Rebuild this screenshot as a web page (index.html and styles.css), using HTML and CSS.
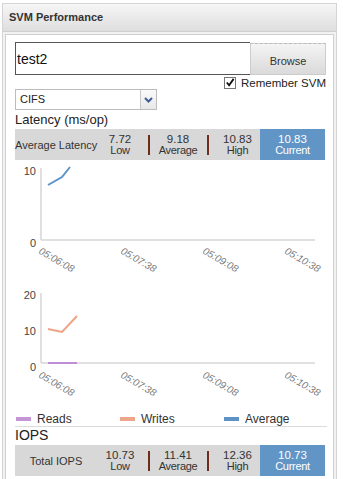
FILE: index.html
```html
<!DOCTYPE html>
<html lang="en">
<head>
    <meta charset="UTF-8">
    <meta name="viewport" content="width=device-width, initial-scale=1.0">
    <title>SVM Performance</title>
    <link rel="stylesheet" href="styles.css">
</head>
<body>

    <div class="panel">
        <div class="panel-head">SVM Performance</div>

        <div class="panel-body">
            <!-- SVM picker -->
            <div class="search-row">
                <input class="svm-input" type="text" value="test2">
                <button class="browse">Browse</button>
            </div>
            <label class="remember">
                <span class="check">
                    <svg width="11" height="11" viewBox="0 0 11 11"><path d="M2 5.5 L4.5 8.5 L9.5 1.5" fill="none" stroke="#111" stroke-width="2"/></svg>
                </span>
                Remember SVM
            </label>

            <div class="select">
                <span class="select-text">CIFS</span>
                <span class="select-arrow">
                    <svg width="9" height="6" viewBox="0 0 9 6"><path d="M1 1 L4.5 4.5 L8 1" fill="none" stroke="#3d5f94" stroke-width="2"/></svg>
                </span>
            </div>

            <!-- Latency -->
            <div class="section-title">Latency (ms/op)</div>
            <div class="stats">
                <div class="stat-label">Average Latency</div>
                <div class="stat low"><span>7.72</span><span>Low</span></div>
                <div class="sep"></div>
                <div class="stat avg"><span>9.18</span><span>Average</span></div>
                <div class="sep sep2"></div>
                <div class="stat high"><span>10.83</span><span>High</span></div>
                <div class="stat current"><span>10.83</span><span>Current</span></div>
            </div>

            <svg class="chart" width="310" height="122" viewBox="0 0 310 122">
                <g class="axis">
                    <line x1="26" y1="8" x2="26" y2="80"/>
                    <line x1="26" y1="80" x2="300" y2="80"/>
                </g>
                <g class="ytick">
                    <text x="21" y="15">10</text>
                    <text x="21" y="87">0</text>
                </g>
                <g class="xtick">
                    <text x="23" y="93" transform="rotate(30 23 93)">05:06:08</text>
                    <text x="105" y="93" transform="rotate(30 105 93)">05:07:38</text>
                    <text x="187" y="93" transform="rotate(30 187 93)">05:09:08</text>
                    <text x="269" y="93" transform="rotate(30 269 93)">05:10:38</text>
                </g>
                <polyline class="line-avg" points="33,25 47,17 55,7"/>
            </svg>

            <svg class="chart chart2" width="310" height="122" viewBox="0 0 310 122">
                <g class="axis">
                    <line x1="26" y1="8" x2="26" y2="78"/>
                    <line x1="26" y1="78" x2="300" y2="78"/>
                </g>
                <g class="ytick">
                    <text x="21" y="14">20</text>
                    <text x="21" y="50">10</text>
                    <text x="21" y="86">0</text>
                </g>
                <g class="xtick">
                    <text x="23" y="92" transform="rotate(30 23 92)">05:06:08</text>
                    <text x="105" y="92" transform="rotate(30 105 92)">05:07:38</text>
                    <text x="187" y="92" transform="rotate(30 187 92)">05:09:08</text>
                    <text x="269" y="92" transform="rotate(30 269 92)">05:10:38</text>
                </g>
                <polyline class="line-writes" points="33,44 47,47 62,31"/>
                <polyline class="line-reads" points="33,78 47,78 62,78"/>
            </svg>

            <div class="legend">
                <div class="legend-item"><span class="swatch reads"></span>Reads</div>
                <div class="legend-item"><span class="swatch writes"></span>Writes</div>
                <div class="legend-item"><span class="swatch average"></span>Average</div>
            </div>

            <!-- IOPS -->
            <div class="section-title iops">IOPS</div>
            <div class="stats">
                <div class="stat-label">Total IOPS</div>
                <div class="stat low"><span>10.73</span><span>Low</span></div>
                <div class="sep"></div>
                <div class="stat avg"><span>11.41</span><span>Average</span></div>
                <div class="sep sep2"></div>
                <div class="stat high"><span>12.36</span><span>High</span></div>
                <div class="stat current"><span>10.73</span><span>Current</span></div>
            </div>
        </div>
    </div>

</body>
</html>
```

FILE: styles.css
```css
body {
    margin: 0;
    padding: 0;
    background-color: #fff;
    font-family: "Liberation Sans", Arial, sans-serif;
    color: #333;
    overflow: hidden;
}

/* Outer panel */
.panel {
    margin: 3px 0 0 2px;
    width: 333px;
    border: 1px solid #d4d4d4;
    border-bottom: none;
    background-color: #f2f2f2;
}

.panel-head {
    height: 27px;
    line-height: 26px;
    padding-left: 6px;
    font-family: "Liberation Sans", Arial, sans-serif;
    font-size: 11px;
    font-weight: bold;
    color: #333;
    background-image: linear-gradient(to bottom, #f6f6f6, #dedede);
    border-bottom: 1px solid #cfcfcf;
}

.panel-body {
    margin: 2px 2px 0 2px;
    padding: 7px 6px 10px 9px;
    background-color: #fff;
    border: 1px solid #d0d0d0;
    border-bottom: none;
}

/* SVM picker */
.search-row {
    display: flex;
}

.svm-input {
    box-sizing: border-box;
    width: 235px;
    height: 33px;
    margin: 0;
    padding: 0 0 0 1px;
    border: 1px solid #555;
    border-right: none;
    font-family: "Liberation Sans", Arial, sans-serif;
    font-size: 14px;
    color: #111;
    outline: none;
}

.browse {
    box-sizing: border-box;
    width: 76px;
    height: 32px;
    margin: 1px 0 0 0;
    padding: 4px 0 0 0;
    border: 1px solid #ccc;
    border-top: 1px dashed #bbb;
    background-image: linear-gradient(to bottom, #f4f4f4, #dadada);
    font-family: "Liberation Sans", Arial, sans-serif;
    font-size: 11px;
    color: #333;
}

.remember {
    display: flex;
    justify-content: flex-end;
    align-items: center;
    gap: 5px;
    height: 13px;
    margin-top: 1px;
    padding-right: 1px;
    font-size: 11.5px;
    color: #222;
}

.check {
    box-sizing: border-box;
    width: 12px;
    height: 12px;
    border: 1px solid #777;
    background-color: #fff;
    display: flex;
    align-items: center;
    justify-content: center;
}

.select {
    display: flex;
    box-sizing: border-box;
    width: 142px;
    height: 21px;
    margin-top: 0;
    border: 1px solid #bcbcbc;
    background-color: #fff;
}

.select-text {
    flex: 1;
    padding-left: 4px;
    line-height: 19px;
    font-size: 11px;
    color: #222;
}

.select-arrow {
    width: 15px;
    border-left: 1px solid #c8c8c8;
    background-image: linear-gradient(to bottom, #fafafa, #e8e8e8);
    display: flex;
    align-items: center;
    justify-content: center;
}

.section-title {
    font-size: 13px;
    line-height: 15px;
    color: #222;
    margin-top: 2px;
}

.section-title.iops {
    font-size: 14px;
    line-height: 16px;
    margin-top: 0;
}

/* Stat bars */
.stats {
    display: flex;
    align-items: center;
    width: 310px;
    height: 31px;
    margin-top: 2px;
    background-color: #d8d8d8;
    font-size: 11px;
    color: #333;
}

.stats > div {
    flex: none;
}

.stat-label {
    width: 82px;
    text-align: center;
    white-space: nowrap;
    padding-top: 1px;
}

.stat {
    display: flex;
    flex-direction: column;
    align-items: center;
    line-height: 11px;
}

.stat span:first-child {
    font-size: 11.5px;
}

.stat span:last-child {
    font-size: 11px;
    letter-spacing: -0.3px;
}

.low { width: 46px; }
.avg { width: 46px; }
.high { width: 45px; }

.sep {
    width: 12px;
    height: 20px;
    display: flex;
    justify-content: center;
}

.sep::before {
    content: "";
    width: 2px;
    height: 20px;
    background-color: #6e2c1d;
}

.sep2 {
    width: 14px;
}

.current {
    width: 65px;
    height: 31px;
    justify-content: center;
    background-color: #6195c6;
    color: #fff;
}

/* Charts */
.chart {
    display: block;
    margin-top: 0;
}

.chart2 {
    margin-top: 3px;
}

.axis line {
    stroke: #d6d6d6;
    stroke-width: 1.5;
}

.ytick text {
    font-family: "Liberation Sans", Arial, sans-serif;
    font-size: 11px;
    fill: #444;
    text-anchor: end;
}

.xtick text {
    font-family: "Liberation Sans", Arial, sans-serif;
    font-size: 10px;
    font-style: italic;
    fill: #777;
}

.line-avg,
.line-writes,
.line-reads {
    fill: none;
    stroke-width: 2;
}

.line-avg { stroke: #5b93c8; }
.line-writes { stroke: #efa385; }
.line-reads { stroke: #c08ed6; }

/* Legend */
.legend {
    display: flex;
    height: 14px;
    padding-top: 5px;
    border-bottom: 1px solid #dcdcdc;
    font-size: 12px;
    color: #333;
}

.legend-item {
    width: 105px;
    display: flex;
    align-items: center;
    gap: 6px;
}

.swatch {
    width: 15px;
    height: 4px;
    margin-left: 1px;
}

.swatch.reads { background-color: #c496d6; }
.swatch.writes { background-color: #eea68a; }
.swatch.average { background-color: #5f92c4; }
```
